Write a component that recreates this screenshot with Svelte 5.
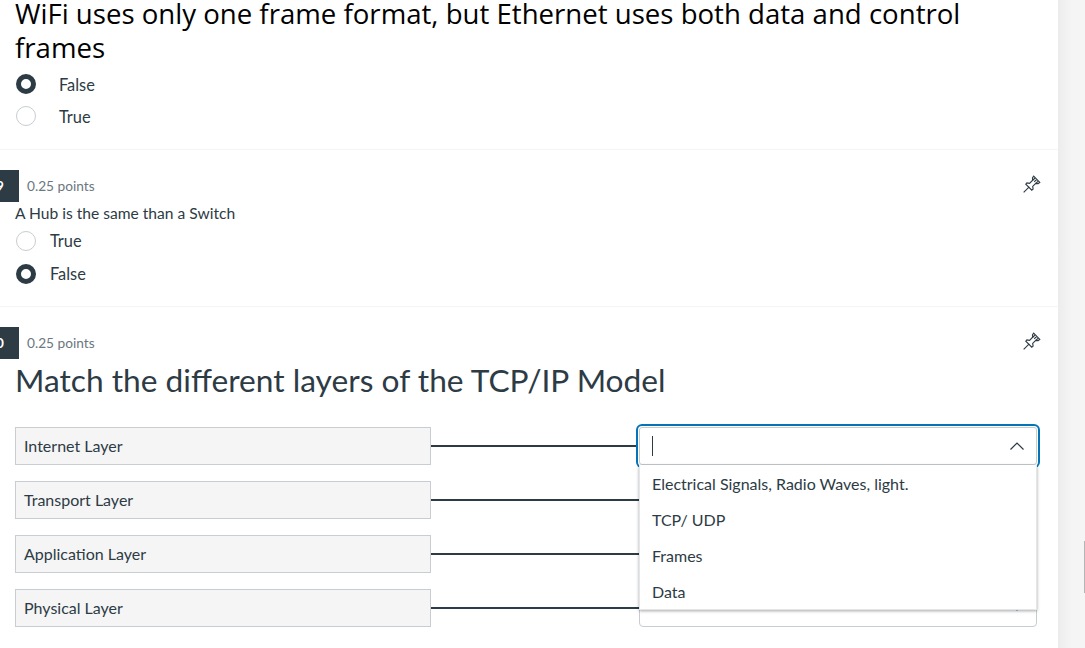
<script>
	const questions = [
		{ num: 29, title: 'A Hub is the same than a Switch', options: [['True', false], ['False', true]] }
	];
	const rows = [
		{ label: 'Internet Layer', open: true },
		{ label: 'Transport Layer' },
		{ label: 'Application Layer' },
		{ label: 'Physical Layer' }
	];
	const choices = ['Electrical Signals, Radio Waves, light.', 'TCP/ UDP', 'Frames', 'Data'];
</script>

{#snippet pin()}
	<svg class="pin" width="20" height="20" viewBox="0 0 18 18" fill="none" stroke="#2d3b45" stroke-width="1">
		<path d="M1.5 16.5 L6.5 11.5" />
		<path d="M10.5 2 L16 7.5 L14.5 8.6 L12.4 8.4 L9.6 11.2 L10 13.6 L8.8 14.6 L3.4 9.2 L4.4 8 L6.8 8.4 L9.6 5.6 L9.4 3.5 Z" />
		<path d="M11.8 3.6 L9.6 5.6 M13.2 5 L11 7 M14.6 6.4 L12.4 8.4" />
	</svg>
{/snippet}

<div class="page">
	<main class="quiz">
		<section class="question first">
			<h2 class="title-wifi">WiFi uses only one frame format, but Ethernet uses both data and control frames</h2>
			<div class="answers wide">
				<label class="answer"><span class="radio checked"></span>False</label>
				<label class="answer"><span class="radio"></span>True</label>
			</div>
		</section>

		{#each questions as q}
			<section class="question">
				<header class="head">
					<span class="badge">{q.num}</span>
					<span class="points">0.25 points</span>
					{@render pin()}
				</header>
				<p class="text">{q.title}</p>
				<div class="answers">
					{#each q.options as [name, on]}
						<label class="answer"><span class="radio" class:checked={on}></span>{name}</label>
					{/each}
				</div>
			</section>
		{/each}

		<section class="question last">
			<header class="head">
				<span class="badge">30</span>
				<span class="points">0.25 points</span>
				{@render pin()}
			</header>
			<h2 class="title-match">Match the different layers of the TCP/IP Model</h2>
			<div class="matches">
				{#each rows as row}
					<div class="row">
						<div class="label">{row.label}</div>
						<div class="line"></div>
						<div class="select" class:open={row.open}>
							<svg class="chevron" class:up={row.open} width="14" height="8" viewBox="0 0 14 8" fill="none" stroke="#2d3b45" stroke-width="1.2">
								<path d="M0.5 7.5 L7 1 L13.5 7.5" />
							</svg>
							{#if row.open}
								<span class="caret"></span>
								<ul class="menu">
									{#each choices as c}
										<li>{c}</li>
									{/each}
								</ul>
							{/if}
						</div>
					</div>
				{/each}
			</div>
		</section>
	</main>
	<aside class="gutter"><span class="thumb"></span></aside>
</div>

<style>
	:global(body) {
		margin: 0;
		background: #fff;
		overflow: hidden;
	}
	.page {
		display: flex;
		width: 1085px;
		height: 648px;
		overflow: hidden;
		font-family: Lato, sans-serif;
		color: #2d3b45;
		font-size: 16px;
	}
	.quiz {
		width: 1058px;
		flex: none;
		background: #fff;
	}
	.gutter {
		position: relative;
		flex: 1;
		background: linear-gradient(to right, #ececec, #f5f5f5 14px);
	}
	.thumb {
		position: absolute;
		right: 0;
		top: 541px;
		width: 1px;
		height: 52px;
		background: #b5b5b5;
	}
	.question {
		border-bottom: 1px solid #f5f5f5;
		padding: 20px 15px 0;
		height: 157px;
		box-sizing: border-box;
	}
	.question.first {
		height: 154px;
		margin-top: -4px;
		padding-top: 0;
	}
	.question.first .answers {
		margin-top: 4px;
	}
	.question.last {
		border-bottom: none;
		height: auto;
	}
	.title-wifi {
		margin: 0;
		width: 960px;
		font: 400 27.6px/34px "Open Sans", sans-serif;
		color: #000;
	}
	.answers {
		margin-top: 1px;
	}
	.answers.wide .answer {
		gap: 23px;
		height: 32px;
	}
	.answer {
		display: flex;
		align-items: center;
		gap: 14px;
		height: 33px;
		padding-left: 1px;
		font-size: 16.4px;
	}
	.radio {
		width: 20px;
		height: 20px;
		box-sizing: border-box;
		border: 1px solid #c7cdd1;
		border-radius: 50%;
		background: #fff;
	}
	.radio.checked {
		border: 5.5px solid #2d3b45;
	}
	.head {
		display: flex;
		align-items: center;
		height: 32px;
	}
	.badge {
		flex: none;
		width: 40px;
		margin-left: -36px;
		box-sizing: border-box;
		height: 32px;
		line-height: 32px;
		padding-right: 15px;
		text-align: right;
		background: #2d3b45;
		color: #fff;
		font-weight: 700;
		font-size: 14px;
	}
	.points {
		margin-left: 8px;
		margin-bottom: 2px;
		font-size: 13.7px;
		color: #6b7780;
	}
	.pin {
		margin-left: auto;
		margin-right: 1px;
		margin-bottom: 4px;
	}
	.text {
		margin: 1px 0 0;
		line-height: 20px;
		font-size: 15.6px;
	}
	.title-match {
		margin: 1px 0 0;
		font: 400 31.7px/40px Lato, sans-serif;
		color: #2d3b45;
	}
	.matches {
		margin-top: 27px;
		display: flex;
		flex-direction: column;
		gap: 16px;
	}
	.row {
		display: flex;
		align-items: center;
		height: 38px;
	}
	.label {
		flex: none;
		width: 416px;
		height: 38px;
		box-sizing: border-box;
		border: 1px solid #c7cdd1;
		background: #f5f5f5;
		padding-left: 8px;
		line-height: 36px;
	}
	.line {
		flex: none;
		width: 208px;
		height: 2px;
		background: #2d3b45;
	}
	.select {
		position: relative;
		flex: none;
		width: 398px;
		height: 38px;
		box-sizing: border-box;
		border: 1px solid #c7cdd1;
		border-radius: 4px;
		background: #fff;
	}
	.select.open {
		z-index: 2;
		border-radius: 3px;
		box-shadow: 0 0 0 1px #fff, 0 0 0 3px #0374b5;
	}
	.caret {
		position: absolute;
		left: 12px;
		top: 8px;
		width: 1px;
		height: 20px;
		background: #2d3b45;
	}
	.chevron {
		position: absolute;
		right: 12px;
		top: 13px;
		transform: rotate(180deg);
	}
	.chevron.up {
		top: 14px;
		transform: none;
	}
	.menu {
		position: absolute;
		left: -1px;
		top: 37px;
		width: 398px;
		margin: 0;
		padding: 0;
		list-style: none;
		background: #fff;
		border: 1px solid #e4e7e9;
		border-top: none;
		box-sizing: border-box;
		box-shadow: 0 1px 3px rgba(0, 0, 0, 0.35);
	}
	.menu li {
		height: 36px;
		line-height: 38px;
		padding-left: 12px;
	}
</style>
